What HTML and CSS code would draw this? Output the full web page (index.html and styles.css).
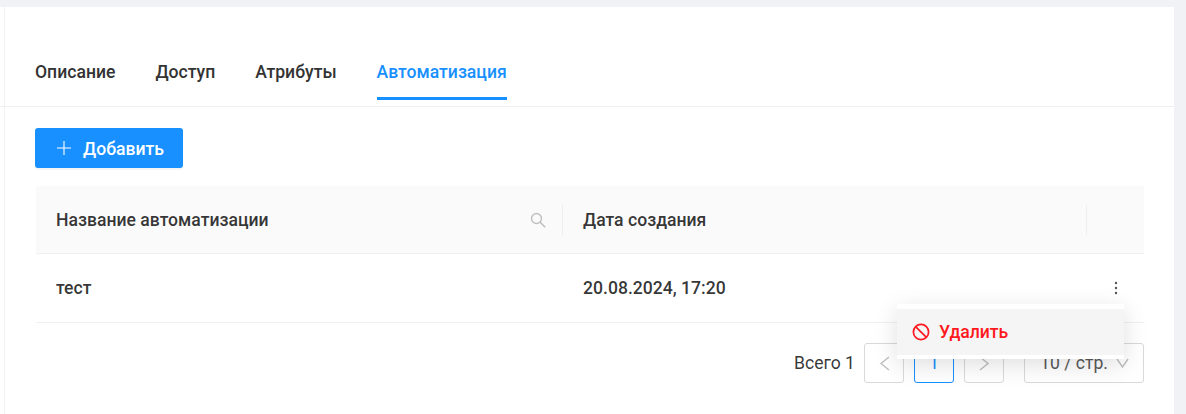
FILE: index.html
```html
<!DOCTYPE html>
<html lang="en">
<head>
  <meta charset="UTF-8" />
  <title>Автоматизация</title>
  <link rel="stylesheet" href="styles.css">
</head>
<body>
  <div class="edge"><div class="edge-line"></div></div>
  <div class="card">
    <div class="tabs">
      <div class="tab">Описание</div>
      <div class="tab">Доступ</div>
      <div class="tab">Атрибуты</div>
      <div class="tab active">Автоматизация</div>
    </div>

    <div class="content">
      <button class="add-btn" type="button">
        <svg class="plus" width="14" height="14" viewBox="0 0 14 14"><path d="M7 0v14M0 7h14" stroke="#fff" stroke-width="1.1" fill="none"/></svg>
        <span class="add-label">Добавить</span>
      </button>

      <div class="table">
        <div class="row head">
          <div class="cell col-name">
            Название автоматизации
            <svg class="search" width="16" height="16" viewBox="0 0 16 16"><circle cx="6.5" cy="6.5" r="5" stroke="#bfbfbf" stroke-width="1.4" fill="none"/><path d="M10.2 10.2l5 5" stroke="#bfbfbf" stroke-width="1.6" fill="none"/></svg>
          </div>
          <div class="cell col-date">Дата создания</div>
          <div class="cell col-actions"></div>
        </div>
        <div class="row body-row">
          <div class="cell col-name">тест</div>
          <div class="cell col-date">20.08.2024, 17:20</div>
          <div class="cell col-actions">
            <svg class="dots" width="4" height="14" viewBox="0 0 4 14"><circle cx="2" cy="2" r="1.2" fill="#555"/><circle cx="2" cy="7" r="1.2" fill="#555"/><circle cx="2" cy="12" r="1.2" fill="#555"/></svg>
          </div>
        </div>
      </div>

      <div class="pagination">
        <span class="total">Всего 1</span>
        <div class="page-btn">
          <svg width="11" height="15" viewBox="0 0 11 15"><path d="M10 1L2 7.5l8 6.5" stroke="#bfbfbf" stroke-width="1.4" fill="none"/></svg>
        </div>
        <div class="page-btn current">1</div>
        <div class="page-btn">
          <svg width="11" height="15" viewBox="0 0 11 15"><path d="M1 1l8 6.500-8 6.500" stroke="#bfbfbf" stroke-width="1.4" fill="none"/></svg>
        </div>
        <div class="page-size">
          10 / стр.
          <svg width="13" height="10" viewBox="0 0 13 10"><path d="M1 1l5.500 8 5.500-8" stroke="#bfbfbf" stroke-width="1.4" fill="none"/></svg>
        </div>
      </div>
    </div>

    <div class="menu">
      <div class="menu-item">
        <svg width="18" height="18" viewBox="0 0 18 18"><circle cx="9" cy="9" r="7.6" stroke="#ff1820" stroke-width="1.7" fill="none"/><path d="M3.800 3.800l10.400 10.400" stroke="#ff1820" stroke-width="1.7" fill="none"/></svg>
        Удалить
      </div>
    </div>
  </div>
</body>
</html>
```

FILE: styles.css
```css
html, body {
  height: 100%;
}
body {
  display: flex;
  margin: 0;
  padding: 7px 12px 0 0;
  box-sizing: border-box;
  background: #f0f2f5;
  font-family: Roboto, "Liberation Sans", sans-serif;
  font-size: 17.6px;
  font-weight: 500;
  color: rgba(0,0,0,0.8);
  overflow: hidden;
}
.edge {
  width: 4px;
  background: white;
}
.edge-line {
  height: 100px;
  box-sizing: border-box;
  border-bottom: 1px solid #f0f0f0;
}
.card {
  position: relative;
  flex: 1;
  box-sizing: border-box;
  border-left: 1px solid #f0f2f5;
  background: white;
  overflow: hidden;
}
.tabs {
  display: flex;
  gap: 40px;
  height: 100px;
  box-sizing: border-box;
  padding: 43px 0 0 30px;
  border-bottom: 1px solid #f0f0f0;
}
.tab {
  height: 50px;
  box-sizing: border-box;
  padding-top: 10px;
  line-height: 24px;
  color: #333;
}
.tab.active {
  color: #1890ff;
  border-bottom: 3px solid #1890ff;
}
.content {
  padding: 21px 30px 0 30px;
}
.add-btn {
  display: flex;
  align-items: center;
  gap: 12px;
  width: 148px;
  height: 40px;
  padding: 0 0 0 22px;
  background: #1890ff;
  color: white;
  border: none;
  border-radius: 3px;
  font: inherit;
  box-shadow: 0 2px 0 rgba(0,0,0,0.04);
}
.add-label {
  padding-top: 2px;
}
.table {
  margin-top: 18px;
  margin-left: 1px;
}
.row {
  display: flex;
  align-items: center;
  border-bottom: 1px solid #f0f0f0;
}
.row.head {
  height: 68px;
  box-sizing: border-box;
  background: #fafafa;
}
.row.body-row {
  height: 69px;
  box-sizing: border-box;
}
.cell {
  display: flex;
  align-items: center;
  box-sizing: border-box;
  padding-left: 20px;
  height: 30px;
}
.col-name {
  width: 527px;
  justify-content: space-between;
  padding-right: 16px;
}
.col-date {
  width: 524px;
  padding-left: 20px;
}
.col-actions {
  flex: 1;
  padding-left: 0;
  justify-content: center;
}
.head .col-name,
.head .col-date {
  border-right: 1px solid #eeeeee;
}
.dots {
  margin-left: 1px;
}
.pagination {
  display: flex;
  align-items: center;
  justify-content: flex-end;
  gap: 10px;
  margin-top: 20px;
  font-weight: 400;
}
.total {
  margin-right: -1px;
}
.page-btn {
  display: flex;
  align-items: center;
  justify-content: center;
  width: 40px;
  height: 40px;
  box-sizing: border-box;
  border: 1px solid #d9d9d9;
  border-radius: 3px;
}
.page-btn.current {
  border-color: #1890ff;
  color: #1890ff;
}
.page-size {
  display: flex;
  align-items: center;
  gap: 8px;
  width: 120px;
  height: 40px;
  margin-left: 10px;
  box-sizing: border-box;
  padding-left: 15px;
  border: 1px solid #d9d9d9;
  border-radius: 3px;
  color: #595959;
}
.menu {
  position: absolute;
  left: 892px;
  top: 297px;
  width: 227px;
  box-sizing: border-box;
  padding: 5px 0 4px;
  background: white;
  box-shadow: 0 6px 24px rgba(0,0,0,0.13);
}
.menu-item {
  display: flex;
  align-items: center;
  gap: 9px;
  height: 46px;
  padding-left: 15px;
  background: #f5f5f5;
  color: #ff1820;
}
```
